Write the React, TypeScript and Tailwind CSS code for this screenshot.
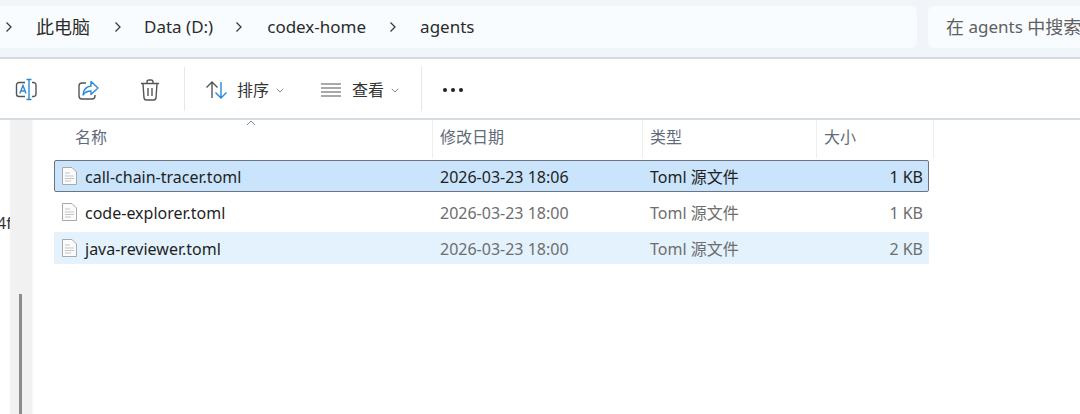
const font = "font-['Noto_Sans','Noto_Sans_CJK_SC',sans-serif]"

function Chevron() {
  return (
    <svg width="8" height="12" viewBox="0 0 8 12" fill="none" stroke="#3a3a3a" strokeWidth="1.3">
      <path d="M1.5 1.5 6 6l-4.5 4.5" />
    </svg>
  )
}

function SmallCaret() {
  return (
    <svg width="8" height="5" viewBox="0 0 8 5" fill="none" stroke="#8a8a8a" strokeWidth="1">
      <path d="M.8.8 4 4 7.2.8" />
    </svg>
  )
}

function RenameIcon() {
  return (
    <svg width="24" height="24" viewBox="0 0 24 24" fill="none" strokeWidth="1.4">
      <path d="M11 4.5H5a2.5 2.5 0 0 0-2.5 2.5v9A2.5 2.5 0 0 0 5 18.500h6" stroke="#555" />
      <path d="M18 4.500h1A2.500 2.500 0 0 1 22 7v9a2.500 2.500 0 0 1-3 2.500h-1" stroke="#555" />
      <path d="M5.800 15.500 9 7.500l3 8M6.800 13h4.400" stroke="#2b88d8" />
      <path d="M12.500 1.500h5M12.500 21.500h5M15 1.500v20" stroke="#2b88d8" />
    </svg>
  )
}

function ShareIcon() {
  return (
    <svg width="24" height="24" viewBox="0 0 24 24" fill="none" strokeWidth="1.400">
      <path d="M10 5H6a3 3 0 0 0-3 3v10a3 3 0 0 0 3 3h10a3 3 0 0 0 3-3v-1" stroke="#555" />
      <path d="M15 3.500 22 10l-7 6.500V13c-3.500 0-6 1-8 4 .5-5 3.500-8.500 8-9V3.500Z" stroke="#2b88d8" strokeLinejoin="round" />
    </svg>
  )
}

function TrashIcon() {
  return (
    <svg width="22" height="24" viewBox="0 0 22 24" fill="none" stroke="#555" strokeWidth="1.400">
      <path d="M2 5.500h18M8 5.500V4a2 2 0 0 1 2-2h2a2 2 0 0 1 2 2v1.500" />
      <path d="M4 5.500l1 14.500a2.500 2.500 0 0 0 2.500 2h7a2.500 2.500 0 0 0 2.500-2l1-14.500" />
      <path d="M9 10v8M13 10v8" />
    </svg>
  )
}

function SortIcon() {
  return (
    <svg width="24" height="20" viewBox="0 0 24 20" fill="none" strokeWidth="1.400">
      <path d="M7 18V2M1.500 7.500 7 2l5.500 5.500" stroke="#555" />
      <path d="M16 2v16M10.500 12.500 16 18l5.500-5.500" stroke="#2b88d8" />
    </svg>
  )
}

function ViewIcon() {
  return (
    <svg width="22" height="16" viewBox="0 0 22 16" fill="none" stroke="#555" strokeWidth="1.200">
      <path d="M1 2h20M1 6h20M1 10h20M1 14h20" />
    </svg>
  )
}

function FileIcon() {
  return (
    <svg width="15" height="18" viewBox="0 0 15 18" fill="#fbfbfb" stroke="#a9a9a9" strokeWidth="1">
      <path d="M.5.5h9.500l4.500 4.500v12.500H.500Z" />
      <path d="M3 6h5M3 9h9M3 11.500h9M3 14h6" stroke="#c4c4c4" fill="none" />
    </svg>
  )
}

const files = [
  { name: "call-chain-tracer.toml", date: "2026-03-23 18:06", size: "1 KB", row: "h-[32px] bg-[#c9e4fb] border border-[#6b7480] rounded-[2px] text-[#1f1f1f]", sub: "text-[#1f1f1f]" },
  { name: "code-explorer.toml", date: "2026-03-23 18:00", size: "1 KB", row: "h-[32px] border border-transparent", sub: "text-[#6e6e6e]" },
  { name: "java-reviewer.toml", date: "2026-03-23 18:00", size: "2 KB", row: "h-[32px] bg-[#e3f2fd] border border-transparent", sub: "text-[#6e6e6e]" },
]

export default function App() {
  return (
    <div className={`w-[1080px] h-[414px] overflow-hidden bg-white flex flex-col ${font}`}>
      {/* address bar */}
      <div className="h-[59px] shrink-0 bg-[#f1f5fa] border-b-2 border-[#d5dbe3] pt-[6px] flex gap-[11px]">
        <div className="w-[917px] h-[42px] bg-[#f9fcfe] rounded-r-[6px] flex items-center text-[17px] text-[#2b2b2b]">
          <div className="ml-[5px] mr-[23px]"><Chevron /></div>
          <span className="text-[18px]">此电脑</span>
          <div className="ml-[24px] mr-[22px]"><Chevron /></div>
          <span>Data (D:)</span>
          <div className="ml-[22px] mr-[24px]"><Chevron /></div>
          <span>codex-home</span>
          <div className="ml-[23px] mr-[23px]"><Chevron /></div>
          <span>agents</span>
        </div>
        <div className="flex-1 h-[42px] bg-[#f9fcfe] rounded-l-[6px] flex items-center pl-[18px] text-[17px] text-[#606060] whitespace-nowrap overflow-hidden">
          <span className="text-[18px]">在</span>&nbsp;agents&nbsp;<span className="text-[18px]">中搜索</span>
        </div>
      </div>

      {/* command bar */}
      <div className="h-[61px] shrink-0 bg-white border-b-2 border-[#d5dde3] flex items-center pt-[3px] text-[16px] text-[#333]">
        <div className="ml-[14px] w-[24px]"><RenameIcon /></div>
        <div className="ml-[38px] w-[24px]"><ShareIcon /></div>
        <div className="ml-[39px] w-[22px]"><TrashIcon /></div>
        <div className="ml-[23px] w-px h-[44px] -mt-[3px] bg-[#e8e8e8]" />
        <div className="ml-[20px]"><SortIcon /></div>
        <span className="ml-[8px]">排序</span>
        <div className="ml-[7px]"><SmallCaret /></div>
        <div className="ml-[36px]"><ViewIcon /></div>
        <span className="ml-[10px]">查看</span>
        <div className="ml-[7px]"><SmallCaret /></div>
        <div className="ml-[22px] w-px h-[44px] -mt-[3px] bg-[#e8e8e8]" />
        <div className="ml-[21px] flex gap-[4px]">
          <div className="w-[4px] h-[4px] rounded-full bg-[#222]" />
          <div className="w-[4px] h-[4px] rounded-full bg-[#222]" />
          <div className="w-[4px] h-[4px] rounded-full bg-[#222]" />
        </div>
      </div>

      <div className="flex-1 flex min-h-0">
        {/* nav pane edge */}
        <div className="w-[10px] shrink-0 overflow-hidden text-[16px] text-[#333] pt-[91px] whitespace-nowrap">
          <div className="-ml-[3px]">4f</div>
        </div>
        <div className="w-[22px] shrink-0 bg-[#f1f1f1] pt-[174px] pl-[9px]">
          <div className="w-[3px] h-full bg-[#8c8c8c]" />
        </div>

        {/* file list */}
        <div className="flex-1 pl-[20px] border-l-2 border-[#fafafa] relative">
          <svg className="absolute left-[212px] top-0" width="10" height="6" viewBox="0 0 10 6" fill="none" stroke="#888" strokeWidth="1">
            <path d="M1 5 5 1l4 4" />
          </svg>
          <div className="h-[38px] flex text-[16px] text-[#5f6b7a] w-[880px]">
            <div className="w-[379px] pl-[21px] pt-[5px] border-r border-[#eeeeee]">名称</div>
            <div className="w-[210px] pl-[7px] pt-[5px] border-r border-[#eeeeee]">修改日期</div>
            <div className="w-[174px] pl-[7px] pt-[5px] border-r border-[#eeeeee]">类型</div>
            <div className="w-[117px] pl-[7px] pt-[5px] border-r border-[#eeeeee]">大小</div>
          </div>
          <div className="mt-[2px] w-[875px] flex flex-col gap-[4px] text-[16px]">
            {files.map((f) => (
              <div key={f.name} className={`flex items-center ${f.row}`}>
                <div className="ml-[7px] w-[23px] flex"><FileIcon /></div>
                <div className="w-[355px] pt-[2px] text-[#1f1f1f] whitespace-nowrap">{f.name}</div>
                <div className={`w-[210px] pt-[2px] whitespace-nowrap ${f.sub}`}>{f.date}</div>
                <div className={`w-[174px] pt-[2px] whitespace-nowrap ${f.sub}`}>Toml 源文件</div>
                <div className={`w-[99px] pt-[2px] text-right whitespace-nowrap ${f.sub}`}>{f.size}</div>
              </div>
            ))}
          </div>
        </div>
      </div>
    </div>
  )
}
